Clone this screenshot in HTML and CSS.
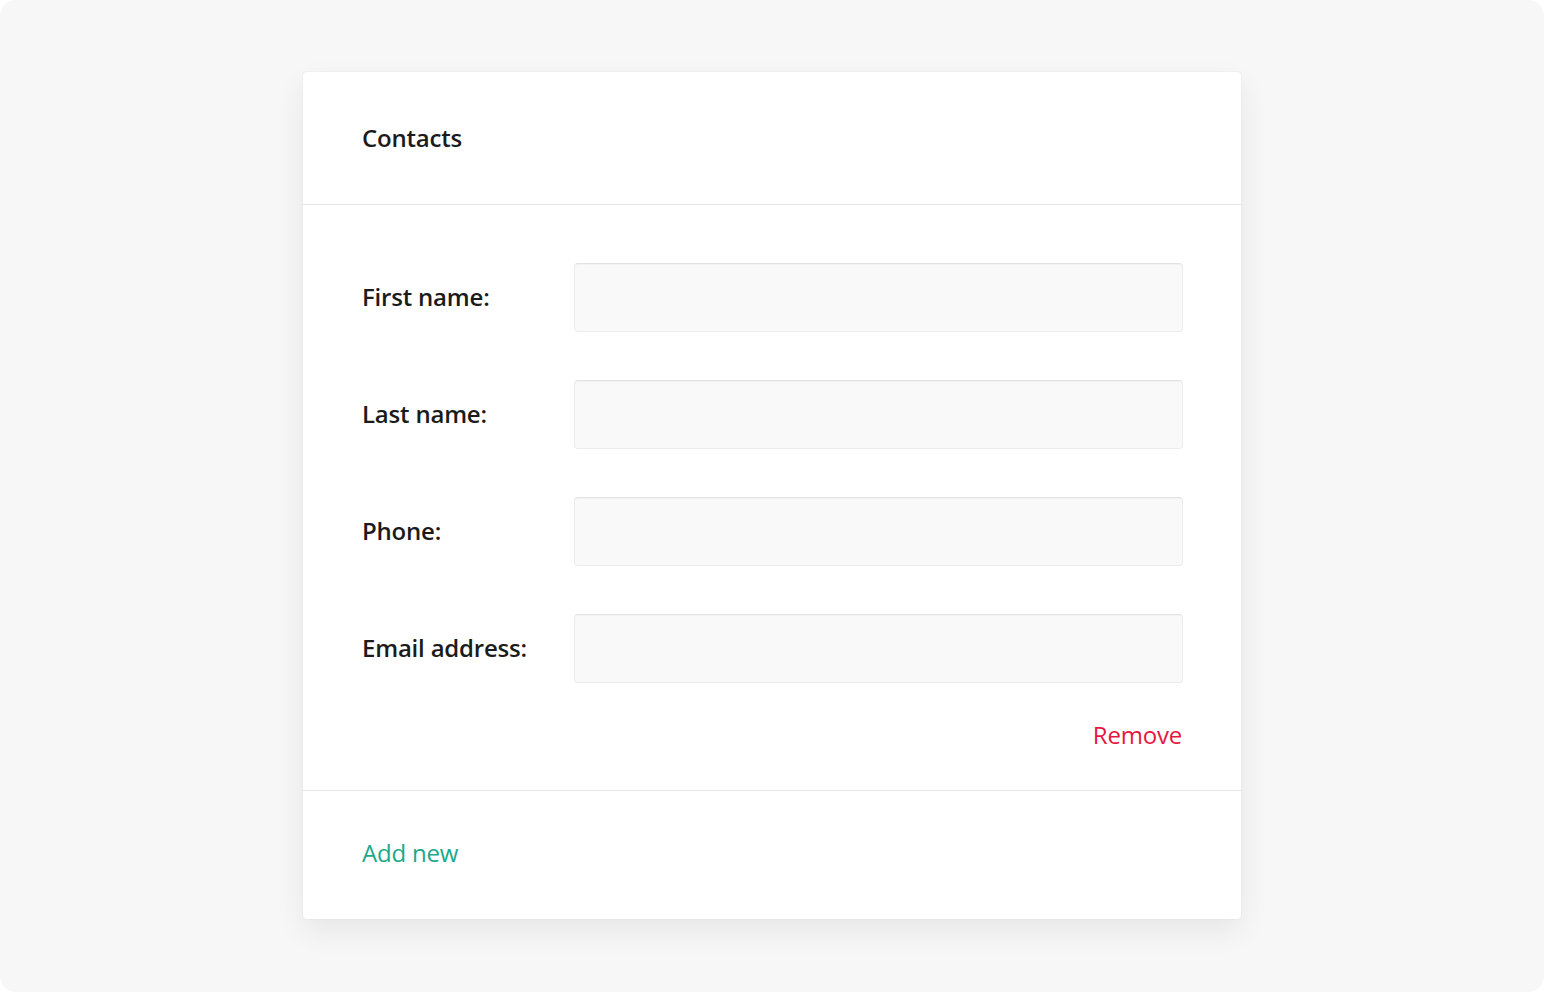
FILE: index.html
```html
<!DOCTYPE html>
<html lang="en">
<head>
<meta charset="utf-8">
<title>Contacts</title>
<link rel="stylesheet" href="styles.css">
</head>
<body>
<div class="screen">
  <div class="card">
    <div class="card-header">
      <h2 class="card-title">Contacts</h2>
    </div>
    <div class="card-body">
      <div class="field">
        <label class="field-label">First name:</label>
        <input class="field-input" type="text">
      </div>
      <div class="field">
        <label class="field-label">Last name:</label>
        <input class="field-input" type="text">
      </div>
      <div class="field">
        <label class="field-label">Phone:</label>
        <input class="field-input" type="text">
      </div>
      <div class="field">
        <label class="field-label">Email address:</label>
        <input class="field-input" type="text">
      </div>
      <div class="actions">
        <a class="link-remove" href="#">Remove</a>
      </div>
    </div>
    <div class="card-footer">
      <a class="link-add" href="#">Add new</a>
    </div>
  </div>
</div>
</body>
</html>
```
FILE: styles.css
```css
html, body {
  margin: 0;
  padding: 0;
  background: #ffffff;
}
body {
  font-family: "Open Sans", "Noto Sans", sans-serif;
  color: #1b1b1b;
}
.screen {
  width: 1544px;
  height: 992px;
  background: #f7f7f7;
  border-radius: 16px;
  box-sizing: border-box;
  padding-top: 72px;
  display: flex;
  justify-content: center;
  align-items: flex-start;
  overflow: hidden;
}
.card {
  width: 938px;
  background: #ffffff;
  border-radius: 3px;
  box-shadow: 0 0 1px rgba(0,0,0,0.2), 0 12px 30px rgba(0,0,0,0.07);
}
.card-header {
  height: 133px;
  box-sizing: border-box;
  padding: 0 59px 2px;
  display: flex;
  align-items: center;
  border-bottom: 1px solid #e6e6e6;
}
.card-title {
  margin: 0;
  font-size: 24px;
  font-weight: 600;
  letter-spacing: -0.2px;
}
.card-body {
  padding: 58px 58px 39px 59px;
  border-bottom: 1px solid #e6e6e6;
  display: flex;
  flex-direction: column;
  gap: 48px;
}
.field {
  display: flex;
  align-items: center;
}
.field-label {
  width: 212px;
  flex: none;
  font-size: 24px;
  font-weight: 600;
  letter-spacing: -0.2px;
  padding-bottom: 2px;
}
.field-input {
  flex: 1;
  height: 69px;
  box-sizing: border-box;
  margin: 0;
  border: 1px solid #ececec;
  border-top-color: #e2e2e2;
  border-radius: 4px;
  background: #f9f9f9;
  box-shadow: inset 0 1px 1px rgba(0,0,0,0.03);
  outline: none;
}
.actions {
  display: flex;
  justify-content: flex-end;
  margin-top: -12px;
  padding-right: 1px;
}
.link-remove {
  color: #e5173f;
  text-decoration: none;
  font-size: 24px;
  font-weight: 500;
  letter-spacing: -0.2px;
  line-height: 32px;
}
.card-footer {
  height: 128px;
  box-sizing: border-box;
  padding: 0 59px 4px;
  display: flex;
  align-items: center;
}
.link-add {
  color: #1aa98b;
  text-decoration: none;
  font-size: 24px;
  font-weight: 500;
  letter-spacing: -0.2px;
  line-height: 32px;
}
```
